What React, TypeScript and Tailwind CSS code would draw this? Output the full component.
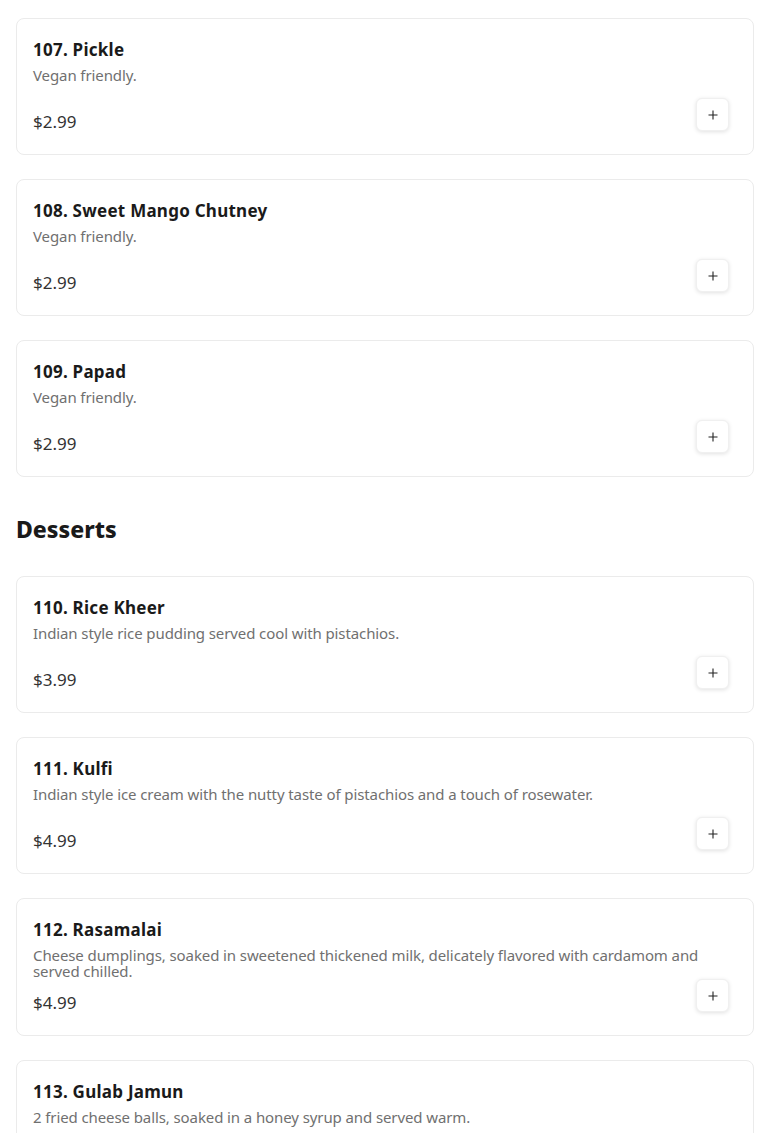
import React from "react";

type Item = { name: string; desc: string; price: string };

const sides: Item[] = [
  { name: "107. Pickle", desc: "Vegan friendly.", price: "$2.99" },
  { name: "108. Sweet Mango Chutney", desc: "Vegan friendly.", price: "$2.99" },
  { name: "109. Papad", desc: "Vegan friendly.", price: "$2.99" },
];

const desserts: Item[] = [
  { name: "110. Rice Kheer", desc: "Indian style rice pudding served cool with pistachios.", price: "$3.99" },
  { name: "111. Kulfi", desc: "Indian style ice cream with the nutty taste of pistachios and a touch of rosewater.", price: "$4.99" },
  {
    name: "112. Rasamalai",
    desc: "Cheese dumplings, soaked in sweetened thickened milk, delicately flavored with cardamom and served chilled.",
    price: "$4.99",
  },
  { name: "113. Gulab Jamun", desc: "2 fried cheese balls, soaked in a honey syrup and served warm.", price: "$3.99" },
];

function Card({ item }: { item: Item }) {
  return (
    <div className="flex min-h-[137px] flex-col rounded-lg border border-[#ebebeb] bg-white px-4 pt-4 pb-5">
      <div className="text-[17px] leading-[30px] font-bold tracking-[0.25px] text-[#1a1a1a]">{item.name}</div>
      <div className="mt-0.5 text-[15px] leading-4 tracking-[-0.1px] text-[#707070]">{item.desc}</div>
      <div className="mt-auto flex items-end justify-between">
        <div className="text-[17px] leading-6 text-[#333333]">{item.price}</div>
        <button className="mr-2 mb-[3px] flex h-[33px] w-[33px] items-center justify-center rounded-md border border-[#f0f0f0] bg-white shadow-[0_1px_4px_rgba(0,0,0,0.12)]">
          <svg width="10" height="10" viewBox="0 0 10 10">
            <path d="M5 0.5v9M0.5 5h9" stroke="#222" strokeWidth="1.1" />
          </svg>
        </button>
      </div>
    </div>
  );
}

export default function App() {
  return (
    <div className="min-h-[1133px] bg-white px-4 pt-[18px]" style={{ fontFamily: '"Noto Sans", "Open Sans", sans-serif' }}>
      <div className="flex flex-col gap-6">
        {sides.map((it) => (
          <Card key={it.name} item={it} />
        ))}
      </div>
      <h2 className="mt-9 mb-[31px] text-[23px] leading-8 font-extrabold text-[#1a1a1a]">Desserts</h2>
      <div className="flex flex-col gap-6">
        {desserts.map((it) => (
          <Card key={it.name} item={it} />
        ))}
      </div>
    </div>
  );
}
